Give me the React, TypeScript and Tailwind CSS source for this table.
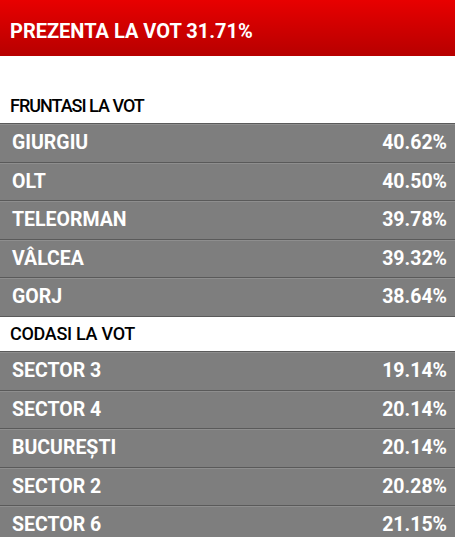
import React from "react";

const top = [
  ["GIURGIU", "40.62%"],
  ["OLT", "40.50%"],
  ["TELEORMAN", "39.78%"],
  ["VÂLCEA", "39.32%"],
  ["GORJ", "38.64%"],
];
const bottom = [
  ["SECTOR 3", "19.14%"],
  ["SECTOR 4", "20.14%"],
  ["BUCUREȘTI", "20.14%"],
  ["SECTOR 2", "20.28%"],
  ["SECTOR 6", "21.15%"],
];

function Row({ name, val }: { name: string; val: string }) {
  return (
    <div className="flex h-[38.5px] items-center justify-between border-t border-[#5a5a5a] bg-[#7e7e7e] pl-3 pr-2 text-[19.5px] font-bold text-white shadow-[inset_0_1px_0_#8e8e8e]">
      <span>{name}</span>
      <span>{val}</span>
    </div>
  );
}

export default function App() {
  return (
    <div className="h-[537px] w-[455px] overflow-hidden bg-white" style={{ fontFamily: "Roboto, 'Liberation Sans', sans-serif" }}>
      <div className="flex h-[56px] items-center bg-gradient-to-b from-[#e80000] to-[#b70000] pl-[10px] pt-[5px] text-[20px] font-bold text-white">
        PREZENTA LA VOT 31.71%
      </div>
      <div className="mt-[31px] flex h-[36px] items-center pl-[10px] text-[18px] font-medium tracking-[-1px] text-black">FRUNTASI LA VOT</div>
      {top.map(([n, v]) => (
        <Row key={n} name={n} val={v} />
      ))}
      <div className="flex h-[35.5px] items-center border-t border-[#5a5a5a] pl-[10px] text-[18px] font-medium tracking-[-0.3px] text-black">CODASI LA VOT</div>
      {bottom.map(([n, v]) => (
        <Row key={n} name={n} val={v} />
      ))}
    </div>
  );
}
